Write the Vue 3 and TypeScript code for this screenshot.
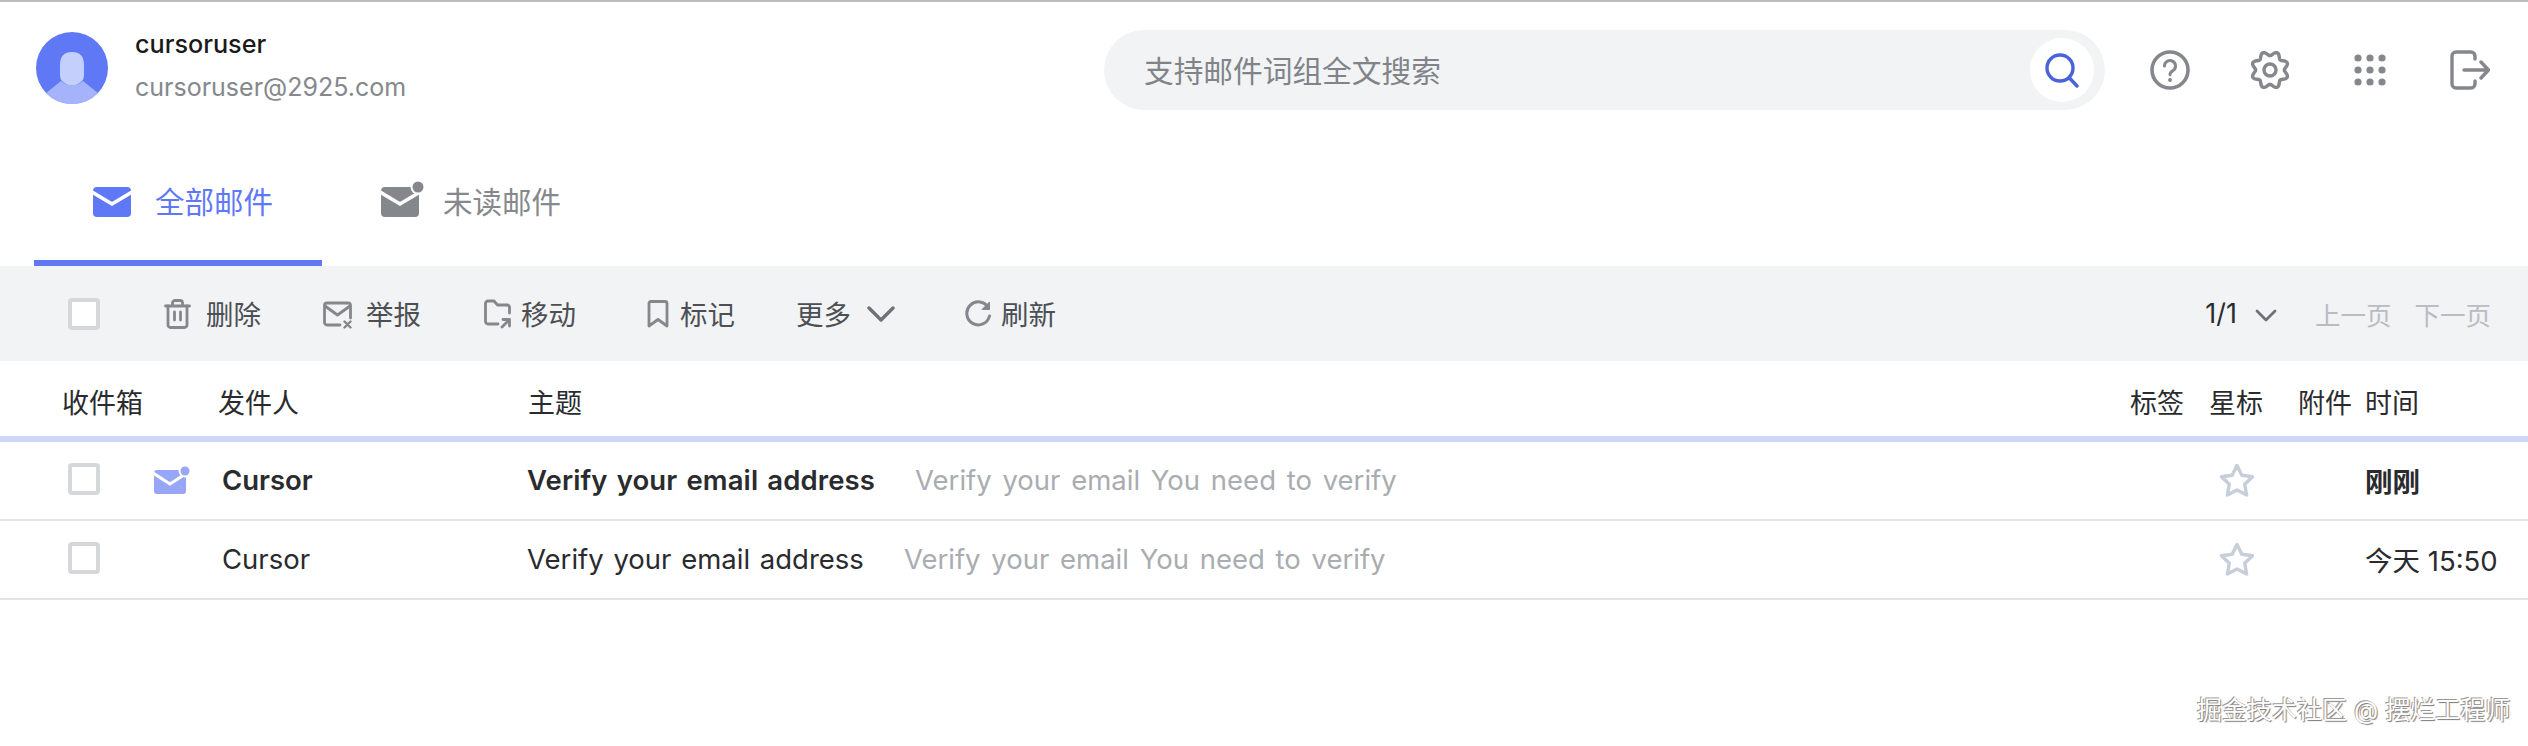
<script setup lang="ts">
const mails = [
  { sender: 'Cursor', subject: 'Verify your email address', preview: 'Verify your email You need to verify', time: '刚刚', unread: true },
  { sender: 'Cursor', subject: 'Verify your email address', preview: 'Verify your email You need to verify', time: '今天 15:50', unread: false },
]

// wavy outline for the settings cog
function gearPath() {
  const pts: string[] = []
  for (let i = 0; i < 120; i++) {
    const a = (i / 120) * Math.PI * 2
    const r = 16.5 + 2.2 * Math.cos(a * 8 + Math.PI)
    pts.push(`${(20 + r * Math.sin(a)).toFixed(2)} ${(20 - r * Math.cos(a)).toFixed(2)}`)
  }
  return 'M' + pts.join('L') + 'Z'
}
const gear = gearPath()
const dots = [4, 16, 28]
</script>

<template>
  <div class="page">
    <header class="top">
      <div class="user">
        <svg class="avatar" width="72" height="72" viewBox="0 0 72 72">
          <circle cx="36" cy="36" r="36" fill="#5f78f6" />
          <path d="M10 61 L25 49 Q36 58 47 49 L62 61 A36 36 0 0 1 10 61Z" fill="#a5b3fa" />
          <path d="M24 33 Q24 20 36 20 Q48 20 48 33 V43 Q48 47 46 49 Q36 58 26 49 Q24 47 24 43Z" fill="#c5cffb" />
        </svg>
        <div class="who">
          <div class="name">cursoruser</div>
          <div class="mail">cursoruser@2925.com</div>
        </div>
      </div>
      <div class="search">
        <span class="placeholder">支持邮件词组全文搜索</span>
        <span class="search-btn">
          <svg width="36" height="36" viewBox="0 0 36 36" fill="none" stroke="#4a63d8" stroke-width="3.4" stroke-linecap="round">
            <circle cx="16" cy="16" r="13" />
            <path d="M25.5 26 L33 34" />
          </svg>
        </span>
      </div>
      <div class="actions">
        <svg width="40" height="40" viewBox="0 0 40 40" fill="none" stroke="#84878c" stroke-width="3.6" stroke-linecap="round">
          <circle cx="20" cy="20" r="18" />
          <path d="M14.5 16 a5.5 5.5 0 1 1 8.5 4.6 q-3 1.6 -3 4.2" stroke-width="3" />
          <circle cx="20" cy="30" r="1.2" fill="#84878c" stroke-width="1.4" />
        </svg>
        <svg width="40" height="40" viewBox="0 0 40 40" fill="none" stroke="#84878c" stroke-width="3.4" stroke-linejoin="round">
          <path :d="gear" />
          <circle cx="20" cy="20" r="6" />
        </svg>
        <svg class="apps" width="40" height="40" viewBox="-4 -4 40 40" fill="#84878c">
          <template v-for="y in dots" :key="y">
            <circle v-for="x in dots" :key="x" :cx="x" :cy="y" r="3.6" />
          </template>
        </svg>
        <svg width="40" height="40" viewBox="0 0 40 40" fill="none" stroke="#84878c" stroke-width="3.4" stroke-linecap="round" stroke-linejoin="round">
          <path d="M25 9 V6 a4 4 0 0 0 -4 -4 H6 a4 4 0 0 0 -4 4 V34 a4 4 0 0 0 4 4 H21 a4 4 0 0 0 4 -4 V31" />
          <path d="M14 20 H38 M31 12 L38.500 20 L31 28" />
        </svg>
      </div>
    </header>

    <nav class="tabs">
      <div class="tab active">
        <svg width="38" height="30" viewBox="0 0 38 30">
          <rect width="38" height="30" rx="4" fill="#5f78f6" />
          <path d="M-1 5 L19 17 L39 5" fill="none" stroke="#fff" stroke-width="3.6" />
        </svg>
        <span>全部邮件</span>
      </div>
      <div class="tab">
        <svg width="44" height="36" viewBox="0 0 44 36">
          <rect y="6" width="38" height="30" rx="4" fill="#84878c" />
          <path d="M-1 11 L19 23 L39 11" fill="none" stroke="#fff" stroke-width="3.6" />
          <circle cx="37" cy="6" r="7.500" fill="#fff" />
          <circle cx="37" cy="6" r="5.500" fill="#84878c" />
        </svg>
        <span>未读邮件</span>
      </div>
    </nav>

    <div class="toolbar">
      <span class="check"></span>
      <div class="tool gap-15">
        <svg width="27" height="30" viewBox="0 0 27 30" fill="none" stroke="#84878c" stroke-width="2.8" stroke-linecap="round" stroke-linejoin="round">
          <path d="M1.500 7 H25.500 M8.500 7 V4 a2.500 2.500 0 0 1 2.500 -2.500 h5 a2.500 2.500 0 0 1 2.500 2.500 V7" />
          <path d="M4 7 V26 a2.500 2.500 0 0 0 2.500 2.500 h14 a2.500 2.500 0 0 0 2.500 -2.500 V7" />
          <path d="M10.500 13 V21 M16.500 13 V21" />
        </svg>
        <span>删除</span>
      </div>
      <div class="tool gap-14">
        <svg width="29" height="30" viewBox="0 0 29 30" fill="none" stroke="#84878c" stroke-width="2.8" stroke-linecap="round" stroke-linejoin="round">
          <path d="M17 26 H4 a2.500 2.500 0 0 1 -2.500 -2.500 V6.500 A2.500 2.500 0 0 1 4 4 H25 a2.500 2.500 0 0 1 2.500 2.500 V19" />
          <path d="M2 7 L14.500 16 L27 7" />
          <path d="M21.500 22.500 L27.500 28.500 M27.500 22.500 L21.500 28.500" stroke-width="2.400" />
        </svg>
        <span>举报</span>
      </div>
      <div class="tool gap-10">
        <svg width="27" height="30" viewBox="0 0 27 30" fill="none" stroke="#84878c" stroke-width="2.8" stroke-linecap="round" stroke-linejoin="round">
          <path d="M14 25 H4 a2.500 2.500 0 0 1 -2.500 -2.500 V4.500 A2.500 2.500 0 0 1 4 2 H10 L13.500 6 H23 a2.500 2.500 0 0 1 2.500 2.500 V14" />
          <path d="M18 28 L25 21 M19 20.500 H25.500 V27" />
        </svg>
        <span>移动</span>
      </div>
      <div class="tool gap-11">
        <svg width="22" height="28" viewBox="0 0 22 28" fill="none" stroke="#84878c" stroke-width="2.8" stroke-linejoin="round">
          <path d="M2 3.500 A2 2 0 0 1 4 1.500 H18 A2 2 0 0 1 20 3.500 V26 L11 19.500 L2 26Z" />
        </svg>
        <span>标记</span>
      </div>
      <div class="tool gap-16">
        <span>更多</span>
        <svg width="28" height="16" viewBox="0 0 28 16" fill="none" stroke="#6e7176" stroke-width="3.4" stroke-linecap="round" stroke-linejoin="round">
          <path d="M2 2 L14 14 L26 2" />
        </svg>
      </div>
      <div class="tool gap-10">
        <svg width="26" height="28" viewBox="0 0 26 28" fill="none" stroke="#84878c" stroke-width="3" stroke-linejoin="round">
          <path d="M23.500 8 A11.500 11.500 0 1 0 24.500 16" stroke-linecap="round" />
          <path d="M24.500 2 V9.500 H17 Z" fill="#84878c" stroke-width="1" />
        </svg>
        <span>刷新</span>
      </div>
      <div class="pager">
        <span class="page-num">1/1</span>
        <svg width="22" height="13" viewBox="0 0 22 13" fill="none" stroke="#6e7176" stroke-width="2.800" stroke-linecap="round" stroke-linejoin="round">
          <path d="M2 2 L11 11 L20 2" />
        </svg>
        <span class="prev">上一页</span>
        <span class="next">下一页</span>
      </div>
    </div>

    <div class="thead">
      <span>收件箱</span>
      <span>发件人</span>
      <span>主题</span>
      <span>标签</span>
      <span>星标</span>
      <span>附件</span>
      <span>时间</span>
    </div>

    <div v-for="(m, i) in mails" :key="i" class="row" :class="{ unread: m.unread }">
      <span class="check"></span>
      <span class="flag">
        <svg v-if="m.unread" width="36" height="28" viewBox="0 0 36 28">
          <rect y="4" width="32" height="24" rx="3" fill="#98a6f7" />
          <path d="M-1 7 L16 18 L33 7" fill="none" stroke="#fff" stroke-width="3" />
          <circle cx="31" cy="5" r="6.500" fill="#fff" />
          <circle cx="31" cy="5" r="4.500" fill="#98a6f7" />
        </svg>
      </span>
      <span class="sender">{{ m.sender }}</span>
      <span class="subject">
        <span class="title">{{ m.subject }}</span>
        <span class="preview">{{ m.preview }}</span>
      </span>
      <svg class="star" width="36" height="34" viewBox="0 0 36 34" fill="none" stroke="#c5ced9" stroke-width="3.4" stroke-linejoin="round">
        <path d="M18 2.500 L22.800 12.300 L33.500 13.800 L25.700 21.300 L27.600 32 L18 26.900 L8.400 32 L10.300 21.300 L2.500 13.800 L13.200 12.300Z" />
      </svg>
      <span class="time">{{ m.time }}</span>
    </div>

    <div class="watermark">掘金技术社区 @ 摆烂工程师</div>
  </div>
</template>

<style scoped>
.page {
  position: relative;
  width: 2528px;
  height: 746px;
  overflow: hidden;
  background: #fff;
  font-family: Inter, "Noto Sans CJK SC", sans-serif;
  color: #2a2b2e;
}
.top {
  display: flex;
  height: 120px;
  box-sizing: border-box;
  border-top: 2px solid #bcbcbc;
  padding: 28px 0 0 36px;
}
.user {
  display: flex;
  gap: 27px;
  width: 1068px;
  height: 76px;
  padding-top: 2px;
}
.name { font-size: 25.200px; font-weight: 500; line-height: 28px; color: #1a1a1a; margin-top: -2px; }
.mail { font-size: 25px; line-height: 28px; color: #85888c; margin-top: 15px; }
.search {
  display: flex;
  align-items: center;
  justify-content: space-between;
  width: 1001px;
  height: 80px;
  box-sizing: border-box;
  padding: 0 11px 0 41px;
  border-radius: 40px;
  background: #f1f3f5;
}
.placeholder { font-size: 29.700px; color: #808388; margin-top: -2px; margin-left: -1px; }
.search-btn {
  display: flex;
  align-items: center;
  justify-content: center;
  width: 64px;
  height: 64px;
  border-radius: 50%;
  background: #fff;
}
.actions {
  display: flex;
  align-items: center;
  gap: 60px;
  height: 80px;
  margin-left: 45px;
}
.tabs { display: flex; margin-top: 20px; margin-left: 34px; }
.tab {
  display: flex;
  align-items: center;
  gap: 24px;
  width: 288px;
  height: 126px;
  box-sizing: border-box;
  padding: 3px 0 0 59px;
  border-bottom: 6px solid transparent;
  font-size: 29.500px;
  color: #85888c;
}
.tab span { margin-top: -3px; }
.tab.active { color: #5f78f6; border-bottom-color: #5f78f6; }
.tab + .tab { width: auto; gap: 18px; }
.tab + .tab svg { margin-top: -6px; }
.toolbar {
  display: grid;
  grid-template-columns: 96px 159px 161px 163px 149px 169px 1fr auto;
  align-items: center;
  height: 95px;
  padding: 0 37px 0 68px;
  background: #f1f3f5;
  font-size: 27.500px;
  color: #4c4f54;
}
.tool { display: flex; align-items: center; }
.tool span { margin-top: -2px; }
.gap-10 { gap: 10px; }
.gap-11 { gap: 11px; }
.gap-14 { gap: 14px; }
.gap-15 { gap: 15px; }
.gap-16 { gap: 16px; }
.check {
  display: block;
  width: 32px;
  height: 32px;
  box-sizing: border-box;
  border: 4px solid #d5d7da;
  border-radius: 4px;
  background: #fff;
}
.row .check { margin-top: -3px; }
.pager { display: flex; align-items: center; grid-column: 8; }
.page-num { color: #2a2b2e; font-size: 27px; margin-left: -2px; }
.pager svg { margin-left: 18px; margin-top: 4px; }
.prev, .next { font-size: 25.500px; color: #b9bcc2; }
.prev { margin-left: 38px; }
.next { margin-left: 23px; }
.thead {
  display: grid;
  grid-template-columns: 156px 310px 1fr 79px 89px 67px 163px;
  align-items: center;
  height: 81px;
  padding: 5px 0 0 62px;
  box-sizing: border-box;
  border-bottom: 6px solid #cdd7fa;
  font-size: 27px;
  color: #2a2b2e;
}
.row {
  display: grid;
  grid-template-columns: 86px 68px 305px 1fr 146px 163px;
  align-items: center;
  height: 77px;
  padding-left: 68px;
  border-bottom: 2px solid #e3e4e6;
  font-size: 27.500px;
  color: #2a2b2e;
}
.flag { display: flex; align-items: center; height: 28px; margin-top: -2px; }
.sender, .title, .preview, .time { margin-top: -1px; }
.star { margin-top: -2px; }
.subject { display: flex; gap: 40px; word-spacing: 2px; }
.preview { color: #a9acb1; font-weight: 400; word-spacing: 3px; }
.unread .sender, .unread .title, .unread .time { font-weight: 600; }
.unread .title { letter-spacing: 0.12px; }
.watermark {
  position: absolute;
  left: 2197px;
  top: 694px;
  font-size: 25px;
  line-height: 32px;
  white-space: nowrap;
  color: #fff;
  text-shadow: -1px -1px 0 #9a9a9a, 1px 1px 1px #777;
}
</style>
